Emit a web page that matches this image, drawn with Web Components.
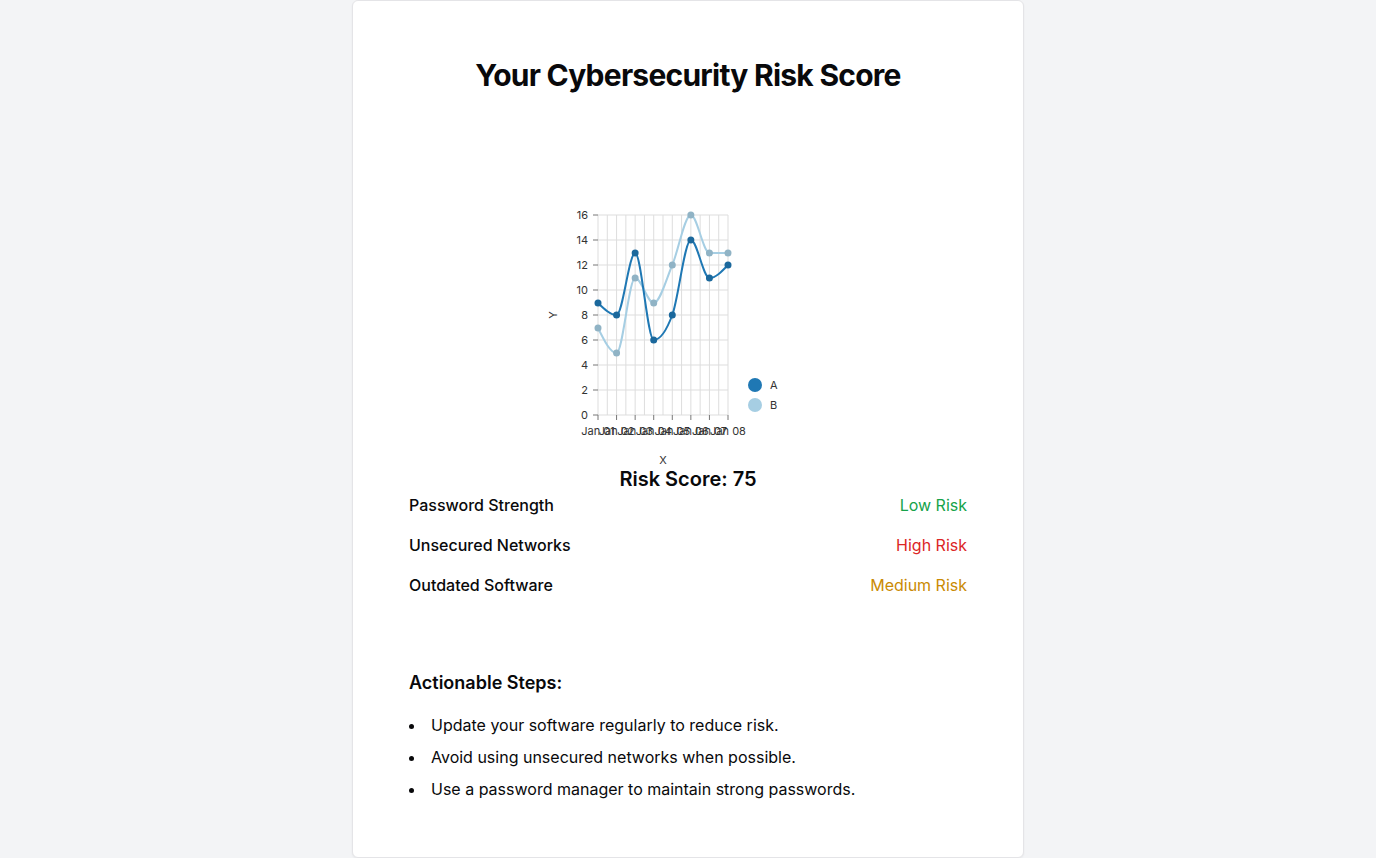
<!DOCTYPE html>
<html lang="en">
<head>
<meta charset="utf-8">
<meta name="viewport" content="width=device-width, initial-scale=1">
<title>Your Cybersecurity Risk Score</title>
<style>
  body {
    margin: 0;
    background: #f3f4f6;
    color: #09090b;
    font: 16px/24px Inter, "Liberation Sans", sans-serif;
  }
</style>
</head>
<body>
<score-card>
  <span slot="title">Your Cybersecurity Risk Score</span>
  <line-chart></line-chart>
  <risk-summary score="75">
    <risk-row level="low">Password Strength</risk-row>
    <risk-row level="high">Unsecured Networks</risk-row>
    <risk-row level="medium">Outdated Software</risk-row>
  </risk-summary>
  <action-steps slot="footer"></action-steps>
</score-card>

<script>
class BaseElement extends HTMLElement {
  render(html) {
    this.attachShadow({ mode: "open" }).innerHTML = html;
  }
}

customElements.define("score-card", class extends BaseElement {
  constructor() {
    super();
    this.render(`
      <style>
        :host { display: block; box-sizing: border-box; max-width: 672px; margin: 0 auto;
          padding: 56px; background: #fff; border: 1px solid #e4e4e7; border-radius: 6px;
          box-shadow: 0 1px 2px rgba(0, 0, 0, .05); }
        h1 { margin: 0; font-size: 30px; line-height: 36px; font-weight: 700;
          letter-spacing: -0.025em; text-align: center; }
        main { display: flex; flex-direction: column; align-items: center; padding: 72px 0; }
      </style>
      <h1><slot name="title"></slot></h1>
      <main><slot></slot></main>
      <slot name="footer"></slot>`);
  }
});

customElements.define("risk-summary", class extends BaseElement {
  constructor() {
    super();
    this.render(`
      <style>
        :host { display: block; align-self: stretch; }
        h2 { margin: 0; font-size: 20px; line-height: 28px; font-weight: 600; text-align: center; }
        div { display: grid; gap: 16px; }
      </style>
      <h2>Risk Score: ${this.getAttribute("score")}</h2>
      <div><slot></slot></div>`);
  }
});

customElements.define("risk-row", class extends BaseElement {
  constructor() {
    super();
    const level = this.getAttribute("level");
    const label = level[0].toUpperCase() + level.slice(1) + " Risk";
    this.render(`
      <style>
        :host { display: flex; justify-content: space-between; align-items: center; }
        .name { font-weight: 500; }
        .low { color: #16a34a; }
        .high { color: #dc2626; }
        .medium { color: #ca8a04; }
      </style>
      <span class="name"><slot></slot></span>
      <span class="${level}">${label}</span>`);
  }
});

customElements.define("action-steps", class extends BaseElement {
  constructor() {
    super();
    this.render(`
      <style>
        :host { display: block; }
        h3 { margin: 0 0 16px; font-size: 18px; line-height: 28px; font-weight: 600; }
        ul { display: grid; gap: 8px; margin: 0; padding: 0; list-style: disc inside; }
      </style>
      <h3>Actionable Steps:</h3>
      <ul>
        <li>Update your software regularly to reduce risk.</li>
        <li>Avoid using unsecured networks when possible.</li>
        <li>Use a password manager to maintain strong passwords.</li>
      </ul>`);
  }
});

const SERIES = [
  { id: "A", color: "#1f78b4", dot: "#1b689c", values: [9, 8, 13, 6, 8, 14, 11, 12] },
  { id: "B", color: "#a6cee3", dot: "#90b3c5", values: [7, 5, 11, 9, 12, 16, 13, 13] }
];
const WIDTH = 130, HEIGHT = 200, MAX = 16, COUNT = 8;
const px = i => i * WIDTH / (COUNT - 1);
const py = v => Math.round(HEIGHT - v * HEIGHT / MAX);

// Monotone cubic interpolation in x, so the curve never overshoots its points.
function monotonePath(values) {
  const p = values.map((v, i) => [px(i), py(v)]);
  const n = p.length, h = px(1);
  const slope = p.slice(1).map((q, i) => (q[1] - p[i][1]) / h);
  const t = p.map((_, i) => {
    if (i === 0 || i === n - 1) return 0;
    const a = slope[i - 1], b = slope[i];
    return (Math.sign(a) + Math.sign(b)) * Math.min(Math.abs(a), Math.abs(b), Math.abs(a + b) / 4);
  });
  t[0] = (3 * slope[0] - t[1]) / 2;
  t[n - 1] = (3 * slope[n - 2] - t[n - 2]) / 2;
  let d = `M${p[0]}`;
  for (let i = 1; i < n; i++) {
    const [x0, y0] = p[i - 1], [x1, y1] = p[i];
    d += `C${x0 + h / 3},${y0 + t[i - 1] * h / 3} ${x1 - h / 3},${y1 - t[i] * h / 3} ${x1},${y1}`;
  }
  return d;
}

customElements.define("line-chart", class extends BaseElement {
  constructor() {
    super();
    let grid = "", axes = "";
    for (let i = 0; i <= 2 * (COUNT - 1); i++)
      grid += `<line x1="${px(i / 2)}" x2="${px(i / 2)}" y2="${HEIGHT}"/>`;
    for (let v = 0; v <= MAX; v += 2) {
      grid += `<line x2="${WIDTH}" y1="${py(v)}" y2="${py(v)}"/>`;
      axes += `<g transform="translate(0,${py(v)})"><line x2="-5"/>
        <text x="-10" text-anchor="end" dominant-baseline="central">${v}</text></g>`;
    }
    for (let i = 0; i < COUNT; i++)
      axes += `<g transform="translate(${px(i)},${HEIGHT})"><line y2="5"/>
        <text y="20" text-anchor="middle">Jan 0${i + 1}</text></g>`;
    const lines = [...SERIES].reverse().map(s =>
      `<path d="${monotonePath(s.values)}" stroke="${s.color}"/>`).join("");
    const dots = [...SERIES].reverse().map(s => s.values.map((v, i) =>
      `<circle cx="${px(i)}" cy="${py(v)}" r="3.5" fill="${s.dot}"/>`).join("")).join("");
    const legend = SERIES.map((s, i) =>
      `<g transform="translate(157,${170 + 20 * i})"><circle r="7" fill="${s.color}"/>
       <text x="15" dominant-baseline="central">${s.id}</text></g>`).join("");
    this.render(`
      <style>
        :host { display: block; width: 300px; max-width: 100%; }
        svg { display: block; width: 100%; overflow: visible; }
        text { font-size: 11px; fill: #333; }
        .grid { stroke: #ddd; }
        .axes line { stroke: #777; }
        .lines { fill: none; stroke-width: 2; }
      </style>
      <svg viewBox="0 0 300 300" role="img" aria-label="Line chart of series A and B">
        <g transform="translate(60,50)">
          <g class="grid">${grid}</g>
          <g class="axes">${axes}</g>
          <text x="65" y="249" text-anchor="middle">X</text>
          <text transform="translate(-41,100) rotate(-90)" text-anchor="middle">Y</text>
          <g class="lines">${lines}</g>
          ${dots}
          ${legend}
        </g>
      </svg>`);
  }
});
</script>
</body>
</html>
